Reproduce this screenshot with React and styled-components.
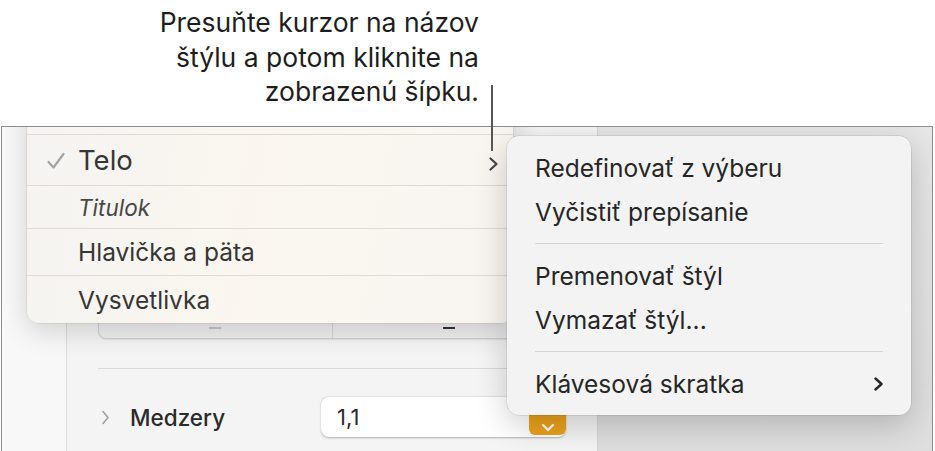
import React from "react";
import styled, { createGlobalStyle } from "styled-components";

const Global = createGlobalStyle`
  html, body { margin: 0; padding: 0; background: #ffffff; }
  body { font-family: Inter, "Noto Sans", "Liberation Sans", sans-serif; }
`;

const Page = styled.div`
  position: relative;
  width: 935px;
  height: 451px;
  overflow: hidden;
  display: flex;
  flex-direction: column;
`;

const Callout = styled.div`
  box-sizing: border-box;
  height: 126px;
  width: 479px;
  padding-top: 5px;
  text-align: right;
  font-size: 26.5px;
  line-height: 34.5px;
  color: #1d1d1d;
`;

const Leader = styled.div`
  position: absolute;
  left: 491px;
  top: 85px;
  width: 1.5px;
  height: 66px;
  background: #555;
  z-index: 5;
`;

const Window = styled.div`
  position: relative;
  flex: 1;
  margin-left: 1px;
  width: 930px;
  border: 1.5px solid #8d8d8d;
  border-bottom: none;
  display: flex;
  overflow: hidden;
`;

const Gutter = styled.div`
  width: 64px;
  background: #f8f8f8;
`;

const Panel = styled.div`
  box-sizing: border-box;
  width: 532px;
  background: #f4f4f4;
  border-left: 1px solid #dddddd;
  border-right: 1px solid #d4d4d4;
  padding: 168px 31px 0 31px;
  display: flex;
  flex-direction: column;
`;

const Canvas = styled.div`
  flex: 1;
  background: linear-gradient(180deg, #e6e6e6, #dedede);
`;

const Segmented = styled.div`
  position: relative;
  height: 42px;
  border-radius: 8px;
  background: #efefef;
  border: 1px solid #d2d2d2;
  box-shadow: 0 1px 1px rgba(0, 0, 0, 0.08);
  display: flex;
`;

const Segment = styled.div`
  flex: 1;
  display: flex;
  align-items: flex-end;
  justify-content: center;
  padding-bottom: 9px;
  border-left: ${(p) => (p.$first ? "none" : "1px solid #d6d6d6")};
`;

const Dash = styled.span`
  display: block;
  width: 12px;
  height: ${(p) => (p.$dark ? "2.5px" : "2px")};
  background: ${(p) => (p.$dark ? "#333" : "#c4c4c4")};
`;

const Rule = styled.div`
  height: 1px;
  background: #d9d9d9;
  margin: 29px -31px 0 0;
`;

const Row = styled.div`
  display: flex;
  align-items: center;
  height: 40px;
  margin-top: 28px;
`;

const RowLabel = styled.span`
  display: flex;
  align-items: center;
  gap: 20px;
  width: 224px;
  padding-left: 3px;
  box-sizing: border-box;
  font-size: 22.5px;
  font-weight: 500;
  color: #2a2a2a;
`;

const Field = styled.div`
  position: relative;
  box-sizing: border-box;
  width: 246px;
  height: 40px;
  background: #ffffff;
  border-radius: 8px;
  box-shadow: 0 0.5px 2px rgba(0, 0, 0, 0.28);
  padding-left: 16px;
  display: flex;
  align-items: center;
  font-size: 22px;
  color: #2a2a2a;
`;

const Stepper = styled.div`
  position: absolute;
  right: 0;
  top: 10px;
  width: 37px;
  height: 28px;
  border-radius: 6px;
  background: #eaa21c;
  display: flex;
  align-items: flex-end;
  justify-content: center;
  padding-bottom: 3px;
  box-sizing: border-box;
`;

const StyleMenu = styled.div`
  position: absolute;
  left: 25px;
  top: -40px;
  width: 486px;
  border-radius: 12px;
  background: linear-gradient(100deg, #f5f4f2 0%, #faf6ef 45%, #f8f5f1 100%);
  box-shadow: 0 8px 28px rgba(0, 0, 0, 0.16), 0 0 0 0.5px rgba(0, 0, 0, 0.12);
  z-index: 2;
`;

const StyleRow = styled.div`
  box-sizing: border-box;
  height: ${(p) => p.$h}px;
  display: flex;
  align-items: center;
  padding-left: 51px;
  position: relative;
  border-bottom: ${(p) => (p.$last ? "none" : "1px solid #dfdbd4")};
  font-size: ${(p) => p.$size || 24.5}px;
  font-style: ${(p) => (p.$italic ? "italic" : "normal")};
  color: ${(p) => (p.$italic ? "#484848" : "#363636")};
`;

const Check = styled.svg`
  position: absolute;
  left: 19px;
  top: 17px;
`;

const RowChevron = styled.svg`
  position: absolute;
  right: 14px;
  top: 22px;
`;

const ActionMenu = styled.div`
  position: absolute;
  left: 505px;
  top: 8.5px;
  box-sizing: border-box;
  width: 404px;
  height: 279px;
  padding: 10px 0 9px;
  border-radius: 12px;
  background: #f3f3f3;
  box-shadow: 0 10px 32px rgba(0, 0, 0, 0.2), 0 0 0 0.5px rgba(0, 0, 0, 0.14);
  z-index: 3;
`;

const Item = styled.div`
  height: 44px;
  display: flex;
  align-items: center;
  justify-content: space-between;
  padding: 0 27px 0 28px;
  font-size: 24.5px;
  color: #262626;
`;

const Divider = styled.div`
  height: 20px;
  display: flex;
  align-items: center;
  padding: 0 28px;
  &::after {
    content: "";
    flex: 1;
    height: 1px;
    background: #d6d6d6;
  }
`;

const ChevronRight = ({ color = "#262626", w = 2.4 }) => (
  <svg width="11" height="14" viewBox="0 0 11 14">
    <path d="M2.5 1.5 L8.5 7 L2.5 12.5" fill="none" stroke={color} strokeWidth={w} strokeLinecap="round" strokeLinejoin="round" />
  </svg>
);

export default function App() {
  return (
    <>
      <Global />
      <Page>
        <Callout>
          Presuňte kurzor na názov
          <br />
          štýlu a potom kliknite na
          <br />
          zobrazenú šípku.
        </Callout>
        <Leader />
        <Window>
          <Gutter />
          <Panel>
            <Segmented>
              <Segment $first>
                <Dash />
              </Segment>
              <Segment>
                <Dash $dark />
              </Segment>
            </Segmented>
            <Rule />
            <Row>
              <RowLabel>
                <svg width="9" height="15" viewBox="0 0 9 15">
                  <path d="M2 1.5 L7 7.5 L2 13.5" fill="none" stroke="#a0a0a0" strokeWidth="1.6" strokeLinecap="round" strokeLinejoin="round" />
                </svg>
                Medzery
              </RowLabel>
              <Field>
                1,1
                <Stepper>
                  <svg width="14" height="9" viewBox="0 0 14 9">
                    <path d="M2 2 L7 7 L12 2" fill="none" stroke="#ffffff" strokeWidth="2.2" strokeLinecap="round" strokeLinejoin="round" />
                  </svg>
                </Stepper>
              </Field>
            </Row>
          </Panel>
          <Canvas />

          <StyleMenu>
            <StyleRow $h={48} />
            <StyleRow $h={51} $size={27.5}>
              <Check width="20" height="18" viewBox="0 0 20 18">
                <path d="M2.5 10 L7.5 15.5 L17.5 2" fill="none" stroke="#a3a3a3" strokeWidth="2.2" strokeLinecap="round" strokeLinejoin="round" />
              </Check>
              Telo
              <RowChevron width="11" height="14" viewBox="0 0 11 14">
                <path d="M2.5 1.5 L8.5 7 L2.5 12.5" fill="none" stroke="#444" strokeWidth="2.2" strokeLinecap="round" strokeLinejoin="round" />
              </RowChevron>
            </StyleRow>
            <StyleRow $h={43} $size={22.5} $italic>
              Titulok
            </StyleRow>
            <StyleRow $h={47}>Hlavička a päta</StyleRow>
            <StyleRow $h={47} $last>
              Vysvetlivka
            </StyleRow>
          </StyleMenu>

          <ActionMenu>
            <Item>Redefinovať z výberu</Item>
            <Item>Vyčistiť prepísanie</Item>
            <Divider />
            <Item>Premenovať štýl</Item>
            <Item>Vymazať štýl...</Item>
            <Divider />
            <Item>
              Klávesová skratka
              <ChevronRight />
            </Item>
          </ActionMenu>
        </Window>
      </Page>
    </>
  );
}
